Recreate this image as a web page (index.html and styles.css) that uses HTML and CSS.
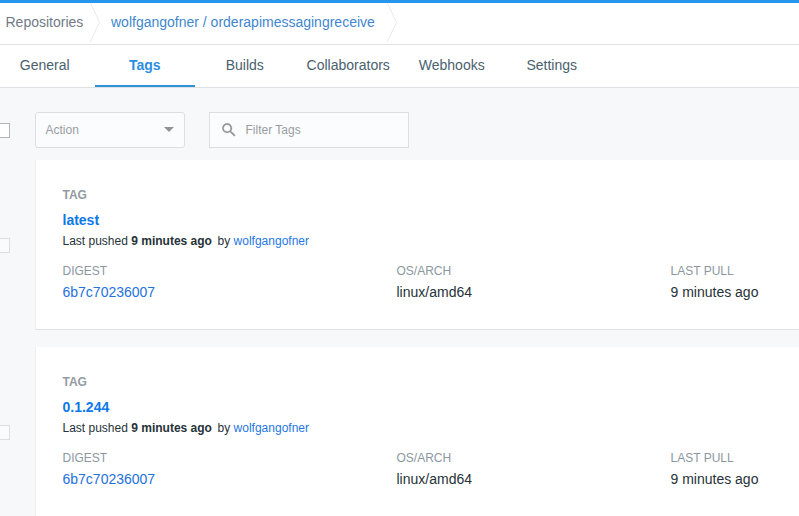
FILE: index.html
```html
<!DOCTYPE html>
<html lang="en">
<head>
<meta charset="utf-8">
<title>Tags</title>
<link rel="stylesheet" href="styles.css">
</head>
<body>
<header class="breadcrumbs">
  <a class="crumb-root">Repositories</a>
  <svg class="chevron" width="12" height="41" viewBox="0 0 12 41"><path d="M0 -1L9.500 19.500L0 39"/></svg>
  <a class="crumb-repo">wolfgangofner / orderapimessagingreceive</a>
  <svg class="chevron" width="12" height="41" viewBox="0 0 12 41"><path d="M0 -1L9.500 19.500L0 39"/></svg>
</header>
<nav class="tabs">
  <a class="tab">General</a>
  <a class="tab active">Tags</a>
  <a class="tab">Builds</a>
  <a class="tab wide">Collaborators</a>
  <a class="tab">Webhooks</a>
  <a class="tab">Settings</a>
</nav>
<main>
  <div class="row toolbar">
    <span class="check enabled"></span>
    <div class="select"><span>Action</span><svg width="10" height="5" viewBox="0 0 10 5"><path d="M0 0H10L5 5Z"/></svg></div>
    <div class="search">
      <svg width="18" height="18" viewBox="0 0 24 24"><path d="M15.500 14h-.79l-.28-.27A6.470 6.470 0 0 0 16 9.500 6.500 6.500 0 1 0 9.500 16c1.610 0 3.090-.59 4.230-1.570l.27.28v.79l5 4.990L20.490 19l-4.990-5zm-6 0C7.010 14 5 11.990 5 9.500S7.010 5 9.500 5 14 7.010 14 9.500 11.990 14 9.500 14z"/></svg>
      <span>Filter Tags</span>
    </div>
  </div>
  <div class="row">
    <span class="check"></span>
    <section class="card">
      <div class="label tag-label">TAG</div>
      <a class="tag-name">latest</a>
      <div class="pushed">Last pushed <b>9 minutes ago</b><span class="by">by <a>wolfgangofner</a></span></div>
      <div class="details">
        <div><div class="label">DIGEST</div><a class="value">6b7c70236007</a></div>
        <div><div class="label">OS/ARCH</div><div class="value">linux/amd64</div></div>
        <div><div class="label">LAST PULL</div><div class="value">9 minutes ago</div></div>
      </div>
    </section>
  </div>
  <div class="row">
    <span class="check"></span>
    <section class="card">
      <div class="label tag-label">TAG</div>
      <a class="tag-name">0.1.244</a>
      <div class="pushed">Last pushed <b>9 minutes ago</b><span class="by">by <a>wolfgangofner</a></span></div>
      <div class="details">
        <div><div class="label">DIGEST</div><a class="value">6b7c70236007</a></div>
        <div><div class="label">OS/ARCH</div><div class="value">linux/amd64</div></div>
        <div><div class="label">LAST PULL</div><div class="value">9 minutes ago</div></div>
      </div>
    </section>
  </div>
</main>
</body>
</html>
```
FILE: styles.css
```css
* { box-sizing: border-box; }
body {
  margin: 0;
  height: 516px;
  overflow: hidden;
  background: #f7f8fa;
  color: #263238;
  font: 12px/16px "Liberation Sans", Arial, sans-serif;
}
.breadcrumbs {
  display: flex;
  height: 45px;
  padding-left: 5.5px;
  border-top: 3px solid #2496ed;
  border-bottom: 1px solid #e1e3e6;
  background: #fff;
  font-size: 14px;
  line-height: 39px;
  white-space: nowrap;
}
.crumb-root { width: 84.5px; color: #707b85; }
.crumb-repo { width: 276px; margin-left: 9px; color: #4187cf; }
.chevron { flex: none; fill: none; stroke: #e6e8ea; }
.tabs {
  display: flex;
  height: 43px;
  margin-left: -5px;
  border-bottom: 1px solid #dee1e4;
  background: #fff;
  color: #4a616e;
  font-size: 14px;
  line-height: 41px;
  text-align: center;
}
.tab { flex: none; width: 100px; height: 42px; padding-right: .5px; }
.tab.wide { width: 107px; }
.tab.active { border-bottom: 2px solid #3091d9; color: #2b8ee0; font-weight: bold; }
.row { display: flex; align-items: center; margin-bottom: 17px; }
.toolbar { margin: 24px 0 12px; height: 36px; }
.check {
  flex: none;
  width: 15px;
  height: 15px;
  margin: 0 25px 0 -5px;
  border: 1px solid #dcdfe2;
  background: #fafbfc;
}
.check.enabled { border-color: #b2b4b7; background: #fff; }
.select, .search {
  display: flex;
  align-items: center;
  height: 36px;
  border: 1px solid #dcdee1;
  background: #fbfcfd;
  color: #979da2;
}
.select {
  justify-content: space-between;
  width: 150px;
  padding: 0 10px 0 9.5px;
  border-radius: 3px;
}
.select svg, .search svg { fill: #8f9397; }
.select svg { margin-top: -2px; }
.search svg { stroke: #8f9397; stroke-width: .3; }
.search { width: 200px; margin-left: 24px; padding-left: 10px; gap: 7.5px; }
.card {
  flex: 1;
  height: 170px;
  padding: 27px 0 0 26.5px;
  border-left: 1px solid #eceef0;
  border-bottom: 1px solid #dfe2e4;
  background: #fff;
}
.label { color: #8b979f; }
.tag-label { font-weight: bold; color: #939ba2; }
.tag-name {
  display: block;
  margin-top: 8px;
  color: #0d78e7;
  font-size: 14px;
  line-height: 18px;
  font-weight: bold;
}
.pushed { margin-top: 4px; white-space: nowrap; }
.by { margin-left: 5.7px; }
.by a { color: #2577e3; }
.details { display: grid; grid-template-columns: 334px 274px 1fr; margin-top: 14px; }
.value { display: block; margin-top: 4px; font-size: 14px; line-height: 18px; white-space: nowrap; }
a.value { color: #2471dc; }
```
